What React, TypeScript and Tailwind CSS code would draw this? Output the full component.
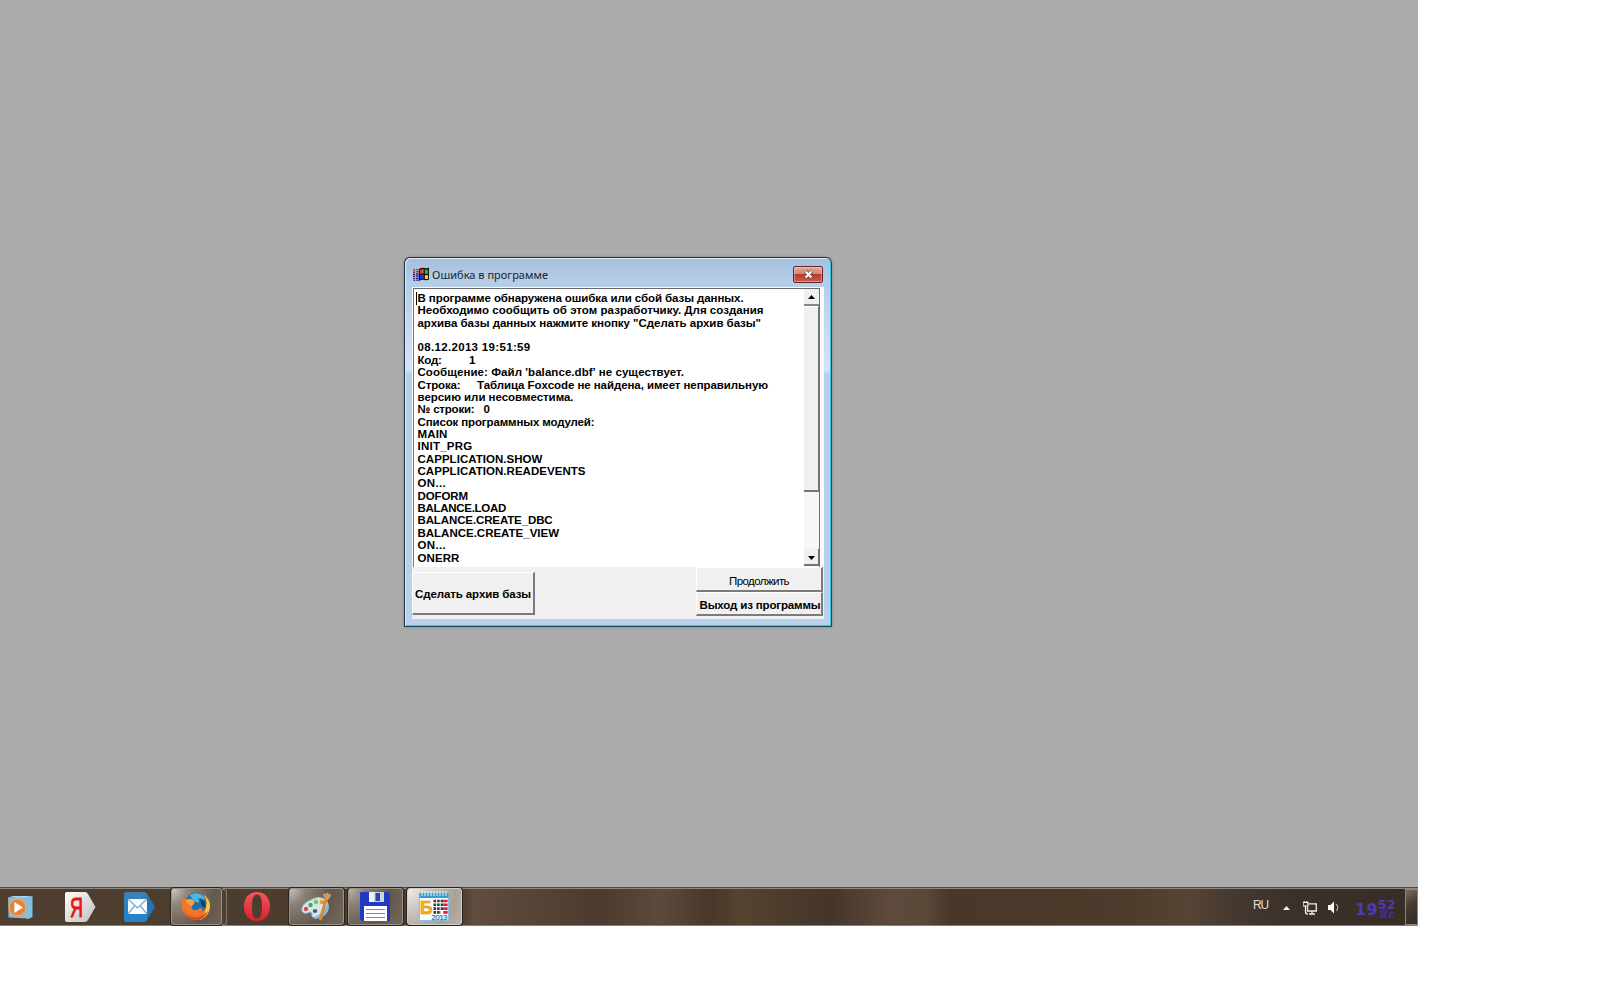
import { useLayoutEffect, useRef } from 'react';

interface FitTextProps {
  text: string;
  width: number;
  className?: string;
}

// Spreads the letters so that the text fills the given width
const FitText = ({ text, width, className = '' }: FitTextProps) => {
  const ref = useRef<HTMLSpanElement>(null);

  useLayoutEffect(() => {
    const el = ref.current;
    if (!el) return;
    el.style.letterSpacing = '0px';
    const natural = el.getBoundingClientRect().width;
    el.style.letterSpacing = `${(width - natural) / text.length}px`;
  }, [text, width]);

  return (
    <span ref={ref} className={`inline-block whitespace-pre ${className}`}>
      {text}
    </span>
  );
};

interface LogLine {
  text: string;
  width: number;
  value?: string;
  valueWidth?: number;
  labelClass?: string;
}

const logLines: LogLine[] = [
  { text: 'В программе обнаружена ошибка или сбой базы данных.', width: 326 },
  { text: 'Необходимо сообщить об этом разработчику. Для создания', width: 346 },
  { text: 'архива базы данных нажмите кнопку "Сделать архив базы"', width: 343.5 },
  { text: ' ', width: 3 },
  { text: '08.12.2013 19:51:59', width: 113 },
  { text: 'Код:', width: 24, value: '1', valueWidth: 6, labelClass: 'w-[51.5px]' },
  { text: "Сообщение: Файл 'balance.dbf' не существует.", width: 266.5 },
  {
    text: 'Строка:',
    width: 43,
    value: 'Таблица Foxcode не найдена, имеет неправильную',
    valueWidth: 291,
    labelClass: 'w-[59.5px]',
  },
  { text: 'версию или несовместима.', width: 156 },
  { text: '№ строки:', width: 57, value: '0', valueWidth: 7, labelClass: 'w-[66px]' },
  { text: 'Список программных модулей:', width: 177 },
  { text: 'MAIN', width: 30 },
  { text: 'INIT_PRG', width: 55 },
  { text: 'CAPPLICATION.SHOW', width: 125 },
  { text: 'CAPPLICATION.READEVENTS', width: 168 },
  { text: 'ON...', width: 28.5 },
  { text: 'DOFORM', width: 50.5 },
  { text: 'BALANCE.LOAD', width: 88.5 },
  { text: 'BALANCE.CREATE_DBC', width: 135 },
  { text: 'BALANCE.CREATE_VIEW', width: 141.5 },
  { text: 'ON...', width: 28.5 },
  { text: 'ONERR', width: 42 },
];

const raised = 'border-t border-l border-t-white border-l-white border-r-2 border-b-2 border-r-[#7b7b7b] border-b-[#7b7b7b] bg-[#f0f0f0]';

const WindowsLogo = () => (
  <svg width="17" height="15" viewBox="0 0 17 15">
    <path d="M6 2 Q9 0 11.5 1 Q14 1.6 16 .6 V12.5 Q14 13.8 11.5 13 Q9 12 6 14Z" fill="#111" />
    <path d="M7 3 Q9 1.6 10.8 2.3 V6.6 Q9 6 7 7Z" fill="#e0402a" />
    <path d="M11.9 2.6 Q13.5 3 15 2.4 V6.6 Q13.4 7.3 11.9 6.8Z" fill="#35b52d" />
    <path d="M7 8 Q9 7 10.8 7.7 V11.7 Q9 11 7 12.2Z" fill="#2838d8" />
    <path d="M11.9 8 Q13.4 8.5 15 7.9 V11.7 Q13.4 12.4 11.9 11.8Z" fill="#eddb28" />
    <path d="M0 3h2M2.8 2.6h3M0 5.2h2M2.8 4.8h3" stroke="#a03050" strokeWidth="1.4" />
    <path d="M0 7.2h2M2.8 7h3M0 9.3h2M2.8 9h3M0 11.4h2M2.8 11.2h3M.5 13.3h1.5M2.8 13.1h3" stroke="#302a80" strokeWidth="1.4" />
  </svg>
);

const ErrorDialog = () => (
  <section className="absolute left-[404px] top-[257px] flex h-[370px] w-[428px] flex-col rounded-t-[6px] border border-[#20323f] border-b-[#174a5a] border-r-[#174a5a] bg-[linear-gradient(to_bottom,#a3bedc_0px,#b4cce6_20px,#c3d7ed_60px,#d5e3f6_112px,#b4d0eb_116px,#b9d1ea_100%)] px-[7px] pb-[7px] shadow-[inset_1px_1px_0_#dcecf8,inset_-1px_-1px_0_#39c3e2,0_0_3px_rgba(0,0,0,0.25)]">
    <header className="flex h-[29px] shrink-0 items-center pb-px pt-[5px]">
      <div className="ml-px mr-[2px] mt-[-1px]">
        <WindowsLogo />
      </div>
      <h1 className="font-['Noto_Sans'] text-[11px] leading-[14px] text-[#1a2430]">
        <FitText text="Ошибка в программе" width={116} />
      </h1>
      <button className="relative ml-auto mr-px flex h-[17px] w-[30px] items-center justify-center rounded-[2px] border border-[#5b2529] bg-[linear-gradient(to_bottom,#e5a79b_0%,#d68476_45%,#b93c2a_50%,#cf5b42_100%)] shadow-[inset_0_0_0_1px_rgba(255,255,255,0.35)]">
        <svg width="11" height="9" viewBox="0 0 11 9">
          <path d="M2.3 1.5 8.7 7.5M8.7 1.5 2.3 7.5" stroke="#6b4b50" strokeWidth="3.8" />
          <path d="M2.6 1.6 8.4 7.4M8.4 1.6 2.6 7.4" stroke="#fff" strokeWidth="2.1" />
        </svg>
      </button>
    </header>

    <div className="flex min-h-0 flex-1 flex-col bg-[#f0f0f0]">
      <div className="flex h-[280px] shrink-0 border-l border-r-4 border-t border-[#fafafa] bg-white">
        <div className="flex flex-1 border-l border-t border-[#757575] border-t-[#696969]">
          <div className="relative flex-1 pl-[3.5px] pt-[3px] font-['Liberation_Sans'] text-[11.5px] font-bold text-black">
            <i className="absolute left-[2px] top-[3px] h-[13px] w-px bg-black" />
            {logLines.map((line, index) => (
              <div key={index} className="flex h-[12.36px] items-center leading-[12.36px]">
                <div className={line.labelClass}>
                  <FitText text={line.text} width={line.width} />
                </div>
                {line.value && <FitText text={line.value} width={line.valueWidth ?? 0} />}
              </div>
            ))}
          </div>
          <div className="flex w-[16px] flex-col border-r border-[#69736c] bg-[#f6f6f6]">
            <div className="flex h-[17px] items-center justify-center border-b-2 border-[#858585] bg-[#f0f0f0] pt-px">
              <svg width="7" height="4">
                <path d="M0 4 3.5 0 7 4Z" fill="#000" />
              </svg>
            </div>
            <div className="h-[186px] border-b-2 border-r border-[#757575] border-t border-t-white bg-[#f0f0f0]" />
            <div className="mb-px mt-auto flex h-[17px] items-center justify-center border-b-2 border-r border-[#757575] bg-[#f0f0f0] pt-[2px]">
              <svg width="7" height="4">
                <path d="M0 0 3.5 4 7 0Z" fill="#000" />
              </svg>
            </div>
          </div>
        </div>
      </div>

      <div className="flex justify-between pr-px font-['Liberation_Sans'] text-[11.5px] text-black">
        <button className={`mt-[5px] flex h-[43px] w-[123px] items-center justify-center pt-[3px] font-bold ${raised}`}>
          <FitText text="Сделать архив базы" width={116} />
        </button>
        <div className="w-[127px]">
          <button className={`flex h-[25px] w-full items-center justify-center pt-[5px] ${raised}`}>
            <FitText text="Продолжить" width={60} />
          </button>
          <button className={`flex h-[24px] w-full items-center justify-center pl-[2px] pt-[4px] font-bold ${raised}`}>
            <FitText text="Выход из программы" width={121} />
          </button>
        </div>
      </div>
    </div>
  </section>
);

const PlayerIcon = () => (
  <svg width="25" height="24" viewBox="0 0 25 24">
    <path d="M0 1.5 19 .5V22.5L.5 21.5Z" fill="#8fb9cc" />
    <path d="M0 1.5 5 0H24L19 1.5Z" fill="#a9d3e6" />
    <path d="M19 1 24.5 0V21L19 23.5Z" fill="#7fc0e4" />
    <circle cx="9.5" cy="11.5" r="8.4" fill="#e8832f" stroke="#f3b683" strokeWidth=".8" />
    <path d="M6.3 6 15 11.5 6.3 17Z" fill="#fff" />
  </svg>
);

const YandexIcon = () => (
  <svg width="31" height="30" viewBox="0 0 31 30">
    <defs>
      <linearGradient id="silver" x1="0" y1="0" x2="1" y2="1">
        <stop offset="0" stopColor="#fff" />
        <stop offset="1" stopColor="#bdbdbd" />
      </linearGradient>
    </defs>
    <path d="M2 0H20Q22 0 23 2L30.5 15 23 28Q22 30 20 30H2Q0 30 0 28V2Q0 0 2 0Z" fill="url(#silver)" />
    <text x="5" y="25" fontSize="27" textLength="13" lengthAdjust="spacingAndGlyphs" fill="#ea1414" stroke="#ea1414" strokeWidth="1" fontFamily="Liberation Sans, sans-serif">Я</text>
  </svg>
);

const MailIcon = () => (
  <svg width="31" height="30" viewBox="0 0 31 30">
    <defs>
      <linearGradient id="mail" x1="0" y1="0" x2="0" y2="1">
        <stop offset="0" stopColor="#3f7fb2" />
        <stop offset="1" stopColor="#2382cf" />
      </linearGradient>
    </defs>
    <path d="M2 0H20Q22 0 23 2L31 15 23 28Q22 30 20 30H2Q0 30 0 28V2Q0 0 2 0Z" fill="url(#mail)" />
    <path d="M23 2 31 15 23 28Z" fill="#1767a5" opacity=".5" />
    <rect x="4" y="7" width="19" height="15" fill="#f8fbff" />
    <path d="M4 7 13.5 16 23 7M4 22 10.5 14M23 22 16.5 14" fill="none" stroke="#78a8d8" strokeWidth="1.2" />
  </svg>
);

const FirefoxIcon = () => (
  <svg width="30" height="29" viewBox="0 0 30 29">
    <circle cx="15" cy="14.5" r="13.5" fill="#ef7024" />
    <path d="M23 3Q31 9 28.5 18 26 26 18 28 25 22 25 14 25 8 23 3Z" fill="#f7c63c" />
    <circle cx="15" cy="11" r="10.5" fill="#236da9" />
    <path d="M9 3Q14 0 20 2.5 24 5 24 8 19 5 17 7 20 12 15 10 11 8 9 3Z" fill="#48b9e4" />
    <path d="M2 5 5 8Q9 6 12 8 15 10 12 13 10 14 11 17 15 20 19 16 22 16 21 19 18 24 12 23 5 21 4 15 1 18 3 22 0 18 .8 12 1 8 2 5Z" fill="#ed792d" />
    <path d="M5 8Q9 6 12 8 15 10 12 13 8 15 8 12 5 11 5 8Z" fill="#f3a13a" />
    <path d="M3 21Q8 28 17 28 25 26 27 19 20 27 12 25 6 24 3 21Z" fill="#d8471d" />
    <path d="M19 7 24 10 25 16 21 14Z" fill="#173c74" />
  </svg>
);

const OperaIcon = () => (
  <svg width="26" height="29" viewBox="0 0 26 29">
    <defs>
      <linearGradient id="opera" x1="0" y1="0" x2="0" y2="1">
        <stop offset="0" stopColor="#f4555b" />
        <stop offset="1" stopColor="#d8212c" />
      </linearGradient>
    </defs>
    <path fillRule="evenodd" d="M13 0C21 0 26 6 26 14.5S21 29 13 29 0 23 0 14.5 5 0 13 0ZM13 2.5C9 2.5 8 8 8 14.5S9 26.5 13 26.5 18 21 18 14.5 17 2.5 13 2.5Z" fill="url(#opera)" />
  </svg>
);

const PaletteIcon = () => (
  <svg width="31" height="31" viewBox="0 0 31 31">
    <path d="M10 9Q18 4 25 9 29 15 26 21 21 28 13 27 10 25 11 22 9 20 6 22 1 23 .8 18 2 12 10 9Z" fill="#d3e7f2" stroke="#9dc3d8" />
    <path d="M27 12Q29 20 23 25 17 29 11 26.5 21 25 27 12Z" fill="#83b9d9" />
    <ellipse cx="14" cy="20" rx="2.3" ry="1.9" fill="#65584c" />
    <circle cx="5" cy="18" r="2.2" fill="#db4a40" />
    <circle cx="9.5" cy="14" r="2.2" fill="#43ad4e" />
    <circle cx="15" cy="11" r="2.3" fill="#8bc34a" />
    <circle cx="21" cy="11" r="2.3" fill="#e89b32" />
    <path d="M25.5 7 19.5 28" stroke="#d18a39" strokeWidth="3" strokeLinecap="round" />
    <path d="M22 2Q24 4 26 1.5 28 4 30 3 30 7 26 9.5 22 7 22 2Z" fill="#c99a66" />
  </svg>
);

const FloppyIcon = () => (
  <svg width="30" height="31" viewBox="0 0 30 31">
    <path d="M1 1H28L30 3V30H2L0 28V2Z" fill="#2139c5" />
    <path d="M9 1H24V11H9Z" fill="#cfd3da" />
    <path d="M9 1H14V11H9Z" fill="#f2f3f5" />
    <path d="M15.5 2H20V10H15.5Z" fill="#2c43b8" />
    <path d="M4 15H27V30H4Z" fill="#fff" />
    <path d="M6 18.5H25M6 22.5H25M6 26.5H25" stroke="#cf6b70" strokeWidth="1.2" />
  </svg>
);

const CalendarIcon = () => (
  <svg width="31" height="31" viewBox="0 0 31 31">
    <rect x=".5" y="3" width="29" height="26.5" fill="#fcfdff" stroke="#8fc1de" />
    <rect x=".5" y="2" width="29" height="5" fill="#2f9fd4" />
    <path d="M3 0V5M6 0V5M9 0V5M12 0V5M15 0V5M18 0V5M21 0V5M24 0V5M27 0V5" stroke="#d9f2fc" strokeWidth="1.1" />
    <path d="M14.5 10H25M14.5 13.8H25M14.5 17.6H25M14.5 21.4H22" stroke="#3a3a3a" strokeWidth="2.6" strokeDasharray="2.6 1" />
    <path d="M26.5 8.7V23" stroke="#df2030" strokeWidth="4.4" strokeDasharray="2.6 1.2" />
    <text x="1" y="22.5" fontSize="19" fontWeight="bold" textLength="12.5" lengthAdjust="spacingAndGlyphs" fill="#f8b414" stroke="#d88a08" strokeWidth=".6" fontFamily="Liberation Sans, sans-serif">Б</text>
    <text x="12.5" y="29" fontSize="7.5" textLength="16" fill="#167caa" stroke="#167caa" strokeWidth=".25" fontFamily="Liberation Sans, sans-serif">2013</text>
  </svg>
);

const taskButton = 'flex h-[37px] shrink-0 items-center justify-center rounded-[3px] border border-[#9b9287] shadow-[0_0_0_1px_#2d251d]';

const Taskbar = () => (
  <footer className="relative flex h-[39px] items-center border-b border-t border-b-[#858079] border-t-[#514b43] bg-[linear-gradient(to_right,#4e3e30_0,#4b3c2e_460px,#604d40_475px,#4b3a2d_600px,#5c4a3c_660px,#49372a_710px,#54432f_740px,#45352a_830px,#5d4a3c_890px,#5a4939_925px,#49372a_950px,#4c3b2b_1120px,#564535_1190px,#443830_1235px,#3c3128_1290px,#382d25_1418px)] shadow-[inset_0_1px_0_#8d877d]">
    <div className="ml-[8px] mr-[32px] mt-[2px]"><PlayerIcon /></div>
    <div className="mr-[28px]"><YandexIcon /></div>
    <div className="mr-[16px]"><MailIcon /></div>
    <div className={`${taskButton} w-[51px] bg-[radial-gradient(circle_at_0%_0%,#d0cbc4_0,#91877c_25%,#65584c_70%,#706355_100%)]`}>
      <div className="mr-[2px]"><FirefoxIcon /></div>
    </div>
    <div className="mr-[17px] h-[36px] w-[5px] rounded-r-[3px] border border-l-0 border-[#837a6f] bg-[#4c4034]" />
    <div className="mr-[19px]"><OperaIcon /></div>
    <div className={`${taskButton} mr-[4px] w-[55px] bg-[radial-gradient(circle_at_0%_0%,#c4c0b9_0,#8a8176_25%,#63574b_65%,#74695d_100%)]`}>
      <div className="mr-px"><PaletteIcon /></div>
    </div>
    <div className={`${taskButton} mr-[4px] w-[55px] bg-[radial-gradient(circle_at_0%_0%,#b8b2aa_0,#8a8176_25%,#63574b_65%,#74695d_100%)]`}>
      <div className="mr-px"><FloppyIcon /></div>
    </div>
    <div className={`${taskButton} w-[55px] border-[#d1cdc7] bg-[radial-gradient(circle_at_0%_0%,#f1eeea_0,#c9c4bd_35%,#aaa297_75%,#b9b2a8_100%)]`}>
      <CalendarIcon />
    </div>

    <div className="ml-auto flex h-full items-center">
      <span className="mb-[4px] mr-[15px] font-['Liberation_Sans'] text-[12px] text-[#e1ddd8]">
        <FitText text="RU" width={15} />
      </span>
      <svg className="mr-[13px] mt-[2px]" width="7" height="4">
        <path d="M0 4 3.5 0 7 4Z" fill="#f3f3f3" />
      </svg>
      <svg className="mr-[11px] mt-[2px]" width="14" height="14" viewBox="0 0 14 14">
        <path d="M6 2.8H13.3V10H4.5V6M9 10V13M6 13H12" fill="none" stroke="#eee" strokeWidth="1.3" />
        <path d="M1.2 0V2M3.8 0V2M0 1.5H5V5H0ZM2.5 5V11Q2.5 13 5 13" fill="none" stroke="#fff" strokeWidth="1.2" />
      </svg>
      <svg className="mr-[16px] mt-px" width="11" height="13" viewBox="0 0 11 13">
        <path d="M0 4H2.5L6 .5V12.5L2.5 9H0Z" fill="#fff" />
        <path d="M8.5 3Q11.5 6.5 8.5 10" fill="none" stroke="#c9c5c0" />
      </svg>
      <div className="mr-[9px] flex h-[22px] w-[41px] font-['DejaVu_Sans'] font-bold text-[#4a38bd]">
        <span className="w-[23px] pt-[6px] text-[16px] leading-[16px]"><FitText text="19" width={23} /></span>
        <span className="flex w-[18px] flex-col pt-[4px]">
          <span className="flex h-[10px] text-[12px] leading-[10px]"><FitText text="52" width={18} /></span>
          <span className="flex h-[10px] pl-[2px] text-[10px] italic leading-[10px] text-[#40309f]"><FitText text="Вс" width={15} /></span>
        </span>
      </div>
      <div className="h-[36px] w-[13px] border border-[#8d857a] bg-[linear-gradient(150deg,#786c62_0%,#453930_45%,#362b23_100%)]" />
    </div>
  </footer>
);

const App = () => {
  return (
    <main className="h-[1000px] w-[1600px] overflow-hidden bg-white">
      <div className="relative flex h-[926px] w-[1418px] flex-col bg-[#ababab]">
        <div className="flex-1" />
        <ErrorDialog />
        <Taskbar />
      </div>
    </main>
  );
};

export default App;
